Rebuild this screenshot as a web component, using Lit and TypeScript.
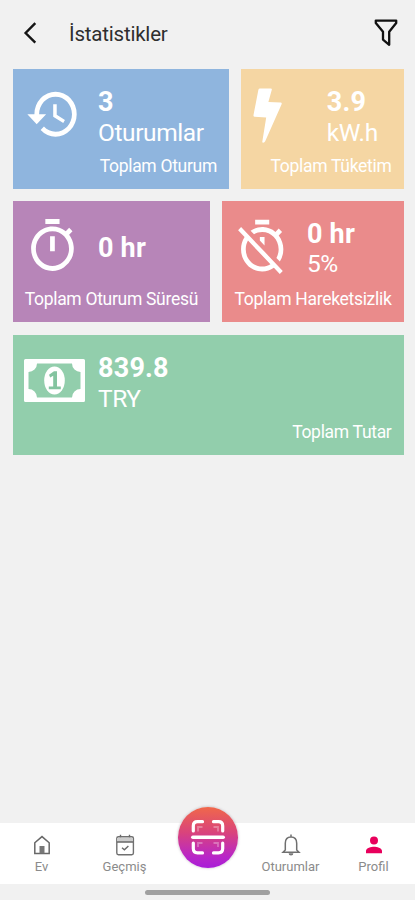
import { LitElement, html, css, svg } from "lit";
import { customElement, property } from "lit/decorators.js";

const historyIcon = svg`<path d="M13 3a9 9 0 0 0-9 9H1l3.89 3.89.07.14L9 12H6c0-3.87 3.13-7 7-7s7 3.13 7 7-3.13 7-7 7c-1.93 0-3.68-.79-4.94-2.06l-1.42 1.42A8.954 8.954 0 0 0 13 21a9 9 0 0 0 0-18zm-1 5v5l4.28 2.54.72-1.21-3.5-2.08V8H12z"/>`;
const timerIcon = svg`<path d="M15 1H9v2h6V1zm-4 13h2V8h-2v6zm8.03-6.61 1.42-1.42c-.43-.51-.9-.99-1.41-1.41l-1.42 1.42A8.962 8.962 0 0 0 12 4c-4.97 0-9 4.03-9 9s4.02 9 9 9a8.994 8.994 0 0 0 7.03-14.61zM12 20c-3.87 0-7-3.13-7-7s3.13-7 7-7 7 3.13 7 7-3.13 7-7 7z"/>`;
const timerOffIcon = svg`<path d="M19.04 4.55l-1.42 1.42a9.012 9.012 0 0 0-10.57-.49l1.46 1.46C9.53 6.35 10.73 6 12 6c3.87 0 7 3.13 7 7 0 1.27-.35 2.47-.94 3.49l1.45 1.45A8.878 8.878 0 0 0 21 13c0-2.12-.74-4.07-1.97-5.61l1.42-1.42-1.41-1.42zM15 1H9v2h6V1zm-4 8.44l2 2V8h-2v1.44zM3.02 4 1.75 5.27 4.5 8.03A8.905 8.905 0 0 0 3 13c0 4.97 4.02 9 9 9 1.84 0 3.55-.55 4.98-1.5l2.5 2.5 1.27-1.27-7.71-7.71L3.02 4zM12 20c-3.87 0-7-3.13-7-7 0-1.28.35-2.48.95-3.52l9.56 9.56c-1.03.61-2.23.96-3.51.96z"/>`;

@customElement("stat-card")
class StatCard extends LitElement {
  @property() value = "";
  @property() unit = "";
  @property() label = "";

  static styles = css`
    :host { display: flex; flex-direction: column; box-sizing: border-box; height: 120px; color: #fff; }
    .main { display: flex; height: var(--main-h, 85px); }
    .icon { width: var(--text-x, 85.5px); height: 84px; flex: none; display: block; }
    .text { display: flex; flex-direction: column; padding-top: var(--text-y, 18px); white-space: nowrap; }
    .value { font-size: 27px; font-weight: 700; line-height: 30px; letter-spacing: 0.2px; }
    .unit { font-size: 24.5px; line-height: var(--unit-h, 31px); letter-spacing: -0.4px; }
    .label { font-size: 17.5px; line-height: 24px; text-align: right; padding-right: 12px; white-space: nowrap; letter-spacing: -0.3px; }
  `;

  render() {
    return html`
      <div class="main">
        <div class="icon"><slot></slot></div>
        <div class="text">
          <span class="value">${this.value}</span>
          ${this.unit ? html`<span class="unit">${this.unit}</span>` : null}
        </div>
      </div>
      <div class="label">${this.label}</div>
    `;
  }
}

@customElement("app-root")
class AppRoot extends LitElement {
  static styles = css`
    :host { display: flex; flex-direction: column; height: 900px; width: 415px; background: #f1f1f1; overflow: hidden; font-family: Roboto, "Noto Sans", sans-serif; }
    svg { display: block; flex: none; }
    .header { height: 69px; display: flex; align-items: flex-start; box-sizing: border-box; }
    .back { margin: 21px 0 0 22px; }
    .title { margin: 20px 0 0 31px; font-size: 20.5px; line-height: 28px; color: #2e2e2e; flex: 1; letter-spacing: -0.2px; }
    .filter { margin: 17px 16px 0 0; }
    .grid { display: flex; flex-direction: column; padding: 0 11.5px 0 12.5px; flex: 1; gap: 12.5px; }
    .row { display: flex; gap: 12px; }
    .blue { width: 216.5px; height: 119.5px; background: #8fb5de; }
    .yellow { flex: 1; height: 119.5px; background: #f5d6a3; --text-x: 85.7px; }
    .purple { width: 197.5px; height: 121px; background: #b785b8; --text-y: 31.5px; --main-h: 86px; }
    .red { flex: 1; height: 121px; background: #ea8b8b; --text-x: 85px; --text-y: 18.4px; --main-h: 86px; --unit-h: 30px; }
    .green { flex: 1; background: #92ceac; }
    .glyph { fill: #fff; }
    .history { margin: 0 0 0 12.5px; padding-top: 15.2px; }
    .timer { margin-left: 11.7px; padding-top: 15.5px; }
    .timeroff { margin-left: 11.7px; padding-top: 16.2px; }
    .bolt { margin-left: 12px; padding-top: 18.6px; }
    .money { margin-left: 11.5px; padding-top: 24px; }
    .nav { position: relative; height: 61px; background: #fff; display: flex; box-sizing: border-box; }
    .tab { width: 83px; display: flex; flex-direction: column; align-items: center; color: #8b8b8b; font-size: 13px; line-height: 16px; padding-top: 10px; box-sizing: border-box; gap: 2px; }
    .fab { position: absolute; left: 177.5px; top: -16.5px; width: 60.5px; height: 61px; border-radius: 50%; background: linear-gradient(180deg, #f0684a 0%, #d9437c 42%, #b826c8 82%, #a81cd8 100%); box-shadow: 0 0 2px 1px rgba(130, 110, 130, 0.25); display: flex; align-items: center; justify-content: center; }
    .home { height: 16px; display: flex; align-items: flex-start; justify-content: center; }
    .bar { width: 125px; height: 5px; border-radius: 3px; background: #a0a0a0; margin-top: 6px; }
  `;

  render() {
    return html`
      <div class="header">
        <svg class="back" width="16" height="24" viewBox="0 0 16 24"><path d="M13.3 2.2 3.6 12l9.7 9.6" fill="none" stroke="#151515" stroke-width="2.4"/></svg>
        <div class="title">İstatistikler</div>
        <svg class="filter" width="26" height="31" viewBox="0 0 26 31"><path d="M2.8 3.6H23.2V6L16.2 14.8V27.8L10 22.6V14.8L2.8 6Z" fill="none" stroke="#111" stroke-width="2.3" stroke-linejoin="round"/></svg>
      </div>
      <div class="grid">
        <div class="row">
          <stat-card class="blue" value="3" unit="Oturumlar" label="Toplam Oturum">
            <svg class="glyph history" width="56.4" height="60" viewBox="0 0 24 24" preserveAspectRatio="none">${historyIcon}</svg>
          </stat-card>
          <stat-card class="yellow" value="3.9" unit="kW.h" label="Toplam Tüketim">
            <svg class="glyph bolt" width="30" height="56" viewBox="0 0 30 56"><path d="M7 0.8H17.8Q19.2 .8 18.8 2.2L15.4 14.3 27.6 15Q29.2 15.1 28.6 16.6L12.2 53.6Q11.4 55.3 9.7 55L9.2 54.6 13.2 29.8 1.7 29.2Q.2 29 .5 27.4L5.4 2.1Q5.7.8 7 .8Z"/></svg>
          </stat-card>
        </div>
        <div class="row">
          <stat-card class="purple" value="0 hr" label="Toplam Oturum Süresü">
            <svg class="glyph timer" width="56.9" height="59.4" viewBox="0 0 24 24" preserveAspectRatio="none">${timerIcon}</svg>
          </stat-card>
          <stat-card class="red" value="0 hr" unit="5%" label="Toplam Hareketsizlik">
            <svg class="glyph timeroff" width="56.4" height="59.3" viewBox="0 0 24 24" preserveAspectRatio="none">${timerOffIcon}</svg>
          </stat-card>
        </div>
        <div class="row">
          <stat-card class="green" value="839.8" unit="TRY" label="Toplam Tutar">
            <svg class="glyph money" width="61" height="43" viewBox="0 0 61 43">
              <path fill-rule="evenodd" d="M1.5 0H59.5Q61 0 61 1.5V41.5Q61 43 59.5 43H1.5Q0 43 0 41.5V1.5Q0 0 1.5 0ZM13 4.5A8.5 8.5 0 0 1 4.5 13V30A8.5 8.5 0 0 1 13 38.5H48A8.5 8.5 0 0 1 56.5 30V13A8.5 8.5 0 0 1 48 4.5Z"/>
              <ellipse cx="30.5" cy="21.5" rx="10.3" ry="14"/>
              <path d="M25 15.8 30 12.3H33V27.5H36.8V30.3H24.8V27.5H29.2V16.8L26.2 18.5Z" fill="#84c4a0"/>
            </svg>
          </stat-card>
        </div>
      </div>
      <div class="nav">
        <div class="tab">
          <svg width="24" height="24" viewBox="0 0 24 24"><path d="M4.8 9.8 12 3.6l7.2 6.2v10.6H4.8Z" fill="none" stroke="#686868" stroke-width="1.5"/><path d="M9.5 13h5v7.4h-5Z" fill="#777"/></svg>
          <span>Ev</span>
        </div>
        <div class="tab">
          <svg width="24" height="24" viewBox="0 0 24 24"><rect x="3.8" y="3.7" width="16.6" height="18" rx="1.6" fill="none" stroke="#707070" stroke-width="1.4"/><path d="M4 5h16v4H4Z" fill="#ccc"/><path d="M4 9h16M7.5 1.8v2.5M16.5 1.8v2.5M9 14.7l2.4 2 4-3.8" fill="none" stroke="#686868" stroke-width="1.4"/></svg>
          <span>Geçmiş</span>
        </div>
        <div class="tab"></div>
        <div class="tab">
          <svg width="24" height="24" viewBox="0 0 24 24"><path d="M4 19.3 6.3 17V10.3Q6.3 4 12 4t5.7 6.3V17L20 19.3ZM12 4V1.5" fill="none" stroke="#707070" stroke-width="1.5"/><path d="M9.6 20.2h4.8A2.4 2.2 0 0 1 9.6 20.2Z" fill="#777"/></svg>
          <span>Oturumlar</span>
        </div>
        <div class="tab">
          <svg width="24" height="24" viewBox="0 0 24 24"><path d="M12 11.5a4 4 0 1 0 0-8 4 4 0 0 0 0 8ZM4 20.3V17.8c0-2.7 5.3-4.1 8-4.1s8 1.4 8 4.1v2.5Z" fill="#e8005c"/></svg>
          <span>Profil</span>
        </div>
        <div class="fab">
          <svg width="36" height="38" viewBox="0 0 36 38" fill="none" stroke="#fff">
            <path d="M8 13.5V9H12.5M28 13.5V9H23.5M8 29V25H12.5M28 29V25H23.5" stroke-width="1.8" opacity="0.3"/>
            <path d="M12.5 3.7H7.5Q3.3 3.7 3.3 8v5M23.5 3.7h5Q32.7 3.7 32.7 8v5M12.5 34.9h-5Q3.3 34.9 3.3 30.6v-5.5M23.5 34.9h5q4.2 0 4.2-4.3v-5.5" stroke-width="3.2" stroke-linecap="round"/>
            <path d="M2.8 19.3h30.4" stroke-width="3.5" stroke-linecap="round"/>
          </svg>
        </div>
      </div>
      <div class="home"><div class="bar"></div></div>
    `;
  }
}
